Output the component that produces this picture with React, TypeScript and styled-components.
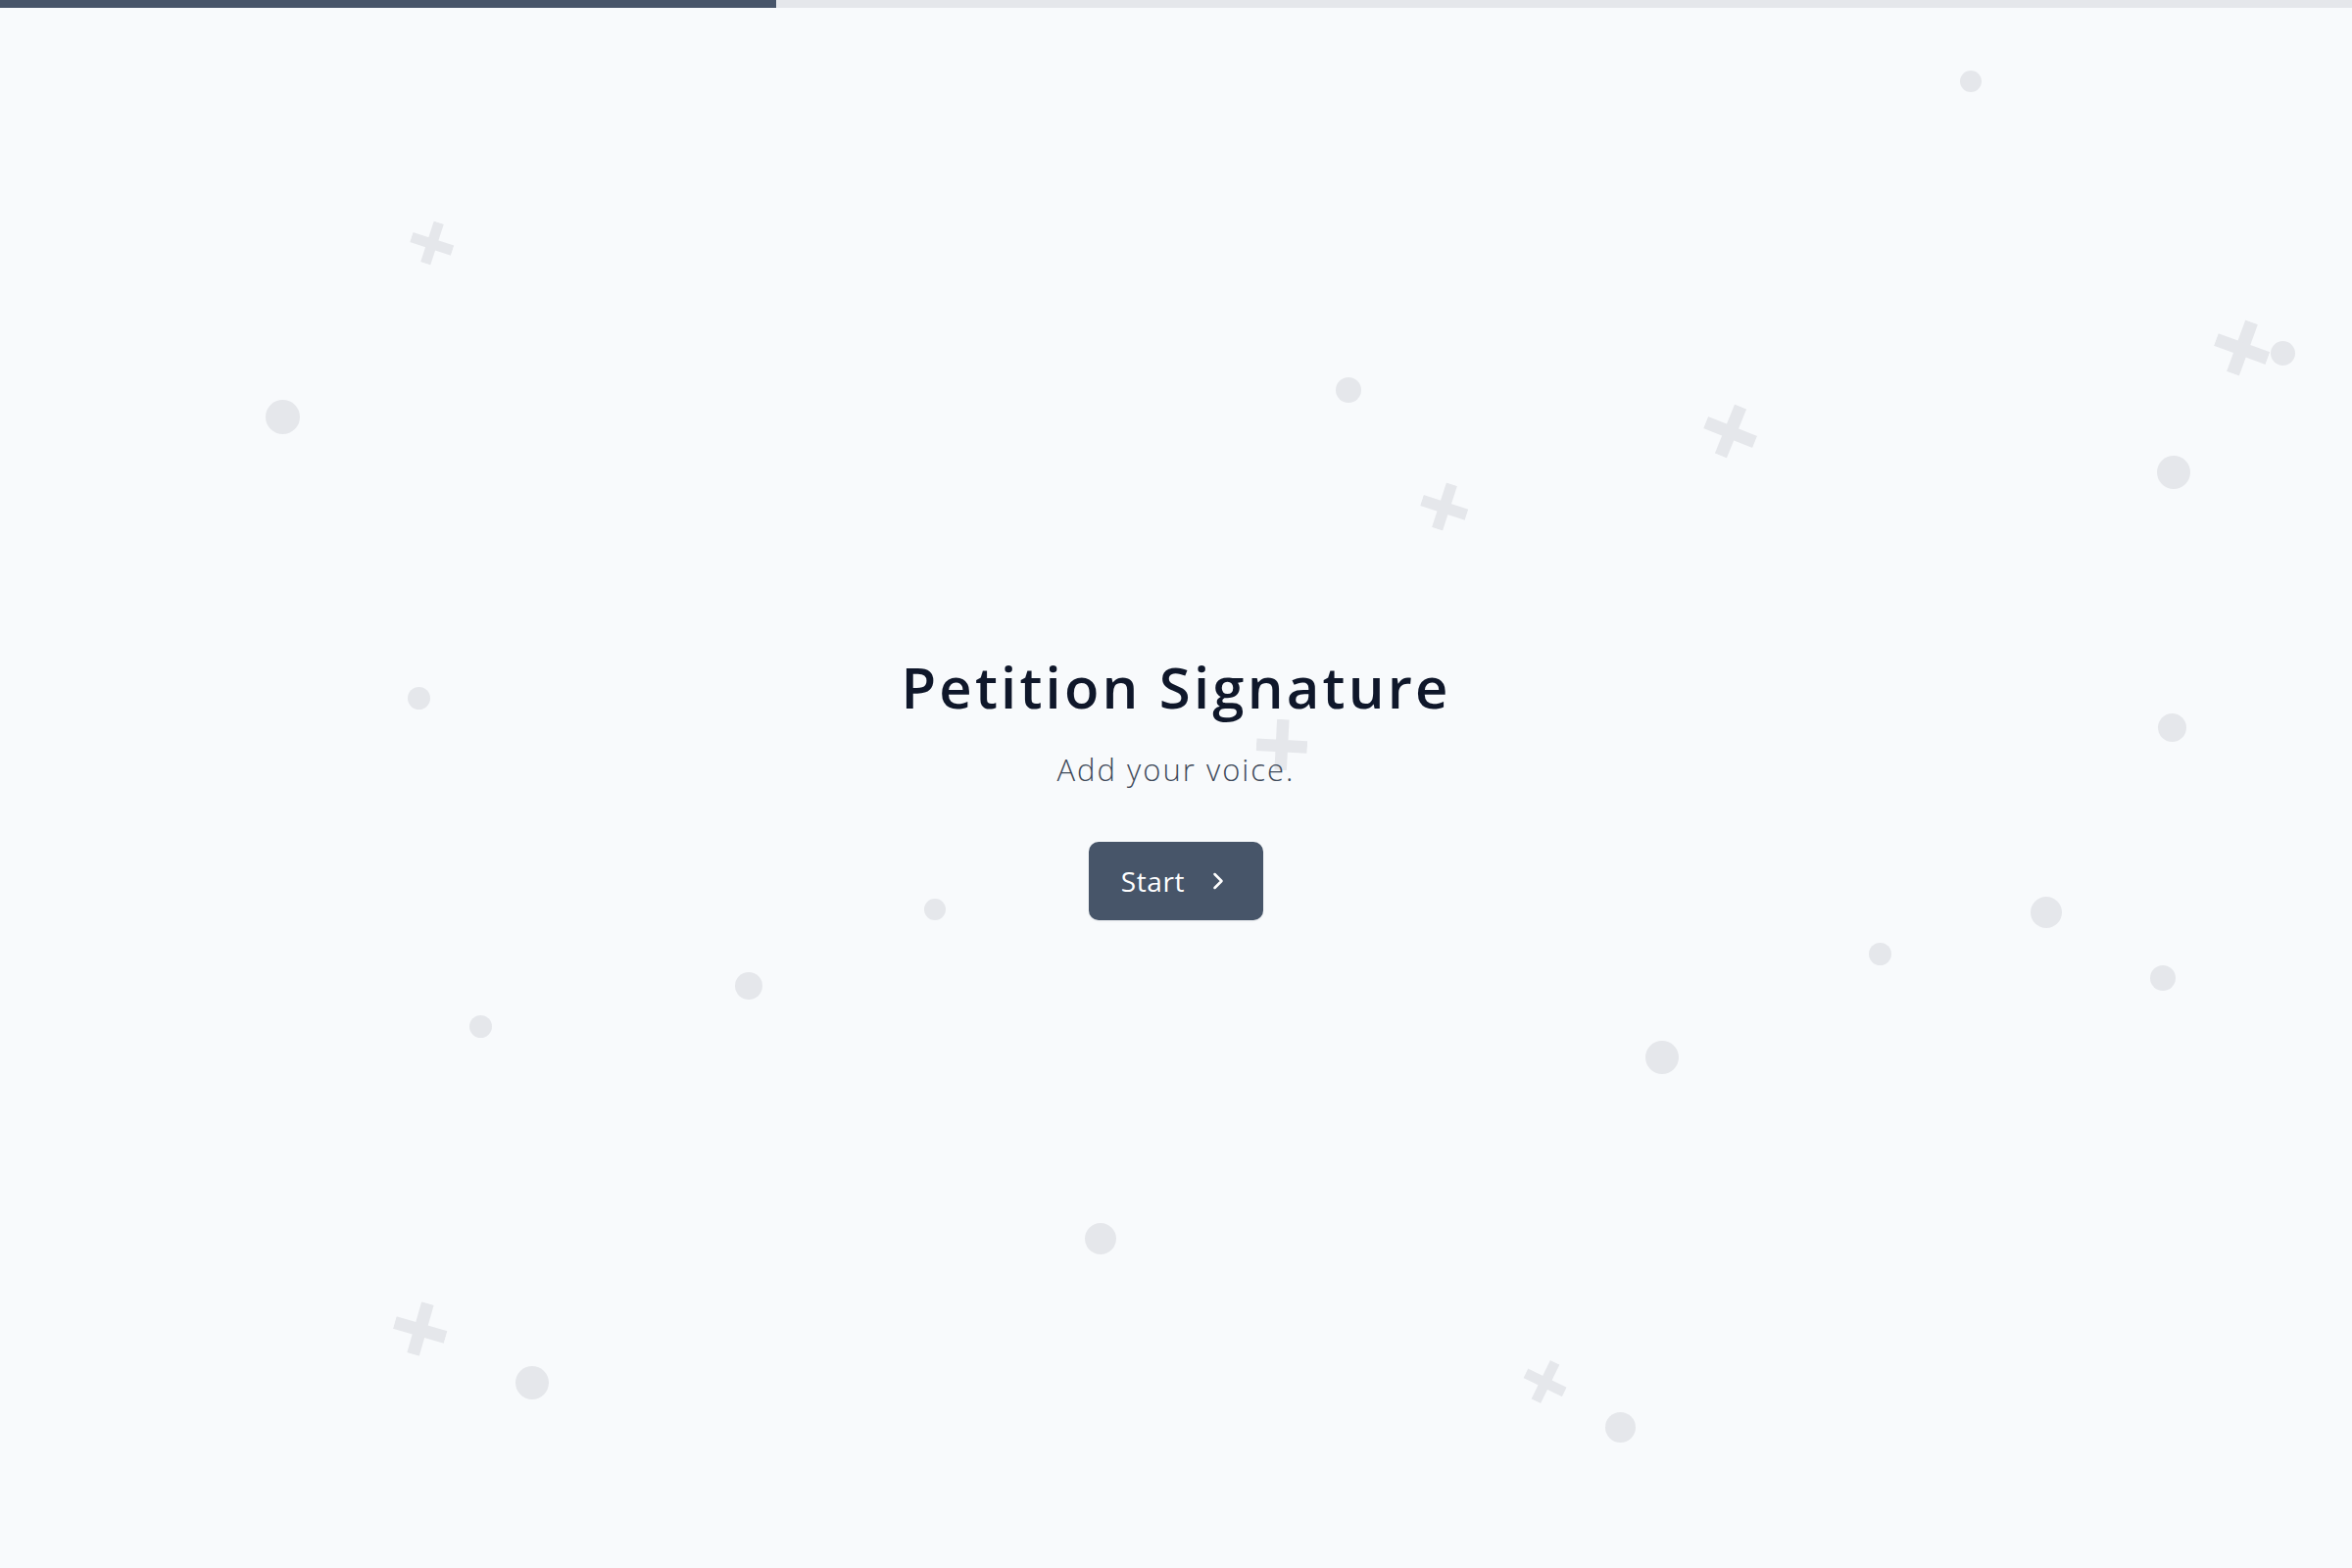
import React from 'react';
import styled, { createGlobalStyle } from 'styled-components';
import { ChevronRight } from 'lucide-react';

const progress = 33;

type Dot = { x: number; y: number; d: number };
type Cross = { x: number; y: number; s: number; r: number };

// background confetti, centres in px
const dots: Dot[] = [
  { x: 2011, y: 83, d: 22 },
  { x: 288, y: 425, d: 35 },
  { x: 1376, y: 398, d: 26 },
  { x: 2329, y: 360, d: 25 },
  { x: 2218, y: 482, d: 34 },
  { x: 427, y: 712, d: 23 },
  { x: 2216, y: 742, d: 29 },
  { x: 954, y: 928, d: 22 },
  { x: 764, y: 1006, d: 28 },
  { x: 490, y: 1047, d: 23 },
  { x: 2088, y: 931, d: 32 },
  { x: 1918, y: 973, d: 23 },
  { x: 2207, y: 998, d: 26 },
  { x: 1696, y: 1079, d: 34 },
  { x: 1123, y: 1264, d: 32 },
  { x: 543, y: 1411, d: 34 },
  { x: 1653, y: 1456, d: 31 },
];

const crosses: Cross[] = [
  { x: 441, y: 248, s: 44, r: 18 },
  { x: 1474, y: 517, s: 48, r: 18 },
  { x: 1766, y: 440, s: 54, r: 22 },
  { x: 2288, y: 355, s: 56, r: 20 },
  { x: 1308, y: 760, s: 52, r: 3 },
  { x: 429, y: 1356, s: 54, r: 16 },
  { x: 1577, y: 1410, s: 44, r: 26 },
];

const GlobalStyle = createGlobalStyle`
  html, body {
    margin: 0;
    padding: 0;
    background: #f8fafc;
  }
  body {
    font-family: "Open Sans", "Liberation Sans", sans-serif;
  }
`;

const App = () => {
  return (
    <>
      <GlobalStyle />
      <Page>
        <ProgressTrack>
          <ProgressFill style={{ width: `${progress}%` }} />
        </ProgressTrack>
        <Backdrop aria-hidden>
          {dots.map((d, i) => (
            <Circle key={`d${i}`} $x={d.x} $y={d.y} $d={d.d} />
          ))}
          {crosses.map((c, i) => (
            <CrossMark key={`c${i}`} $x={c.x} $y={c.y} $s={c.s} $r={c.r} viewBox="0 0 100 100">
              <rect x="38" y="0" width="24" height="100" />
              <rect x="0" y="40" width="100" height="24" />
            </CrossMark>
          ))}
        </Backdrop>
        <Intro>
          <Title>Petition Signature</Title>
          <Subtitle>Add your voice.</Subtitle>
          <StartButton type="button">
            Start
            <ChevronRight size={28} strokeWidth={2.2} />
          </StartButton>
        </Intro>
      </Page>
    </>
  );
};

const Page = styled.div`
  position: relative;
  width: 100%;
  height: 100vh;
  overflow: hidden;
  background: #f8fafc;
  display: flex;
  align-items: center;
  justify-content: center;
`;

const ProgressTrack = styled.div`
  position: absolute;
  top: 0;
  left: 0;
  right: 0;
  height: 8px;
  background: #e5e7eb;
  z-index: 2;
`;

const ProgressFill = styled.div`
  height: 100%;
  background: #475569;
`;

const Backdrop = styled.div`
  position: absolute;
  inset: 0;
  pointer-events: none;
  z-index: 0;
`;

const Circle = styled.span<{ $x: number; $y: number; $d: number }>`
  position: absolute;
  left: ${(p) => p.$x - p.$d / 2}px;
  top: ${(p) => p.$y - p.$d / 2}px;
  width: ${(p) => p.$d}px;
  height: ${(p) => p.$d}px;
  border-radius: 50%;
  background: #e5e7eb;
`;

const CrossMark = styled.svg<{ $x: number; $y: number; $s: number; $r: number }>`
  position: absolute;
  left: ${(p) => p.$x - p.$s / 2}px;
  top: ${(p) => p.$y - p.$s / 2}px;
  width: ${(p) => p.$s}px;
  height: ${(p) => p.$s}px;
  transform: rotate(${(p) => p.$r}deg);
  fill: #e5e7eb;
`;

const Intro = styled.main`
  position: relative;
  z-index: 1;
  display: flex;
  flex-direction: column;
  align-items: center;
  text-align: center;
  margin-top: 5px;
`;

const Title = styled.h1`
  margin: 0;
  font-size: 58px;
  line-height: 1.2;
  font-weight: 600;
  color: #0f172a;
  letter-spacing: 3.2px;
`;

const Subtitle = styled.p`
  margin: 29px 0 0;
  font-size: 31px;
  line-height: 1.3;
  font-weight: 300;
  color: #3f4a5a;
  letter-spacing: 2px;
`;

const StartButton = styled.button`
  margin-top: 54px;
  display: inline-flex;
  align-items: center;
  gap: 20px;
  height: 80px;
  padding: 0 32px 0 33px;
  border: none;
  border-radius: 10px;
  background: #475569;
  color: #ffffff;
  font-family: "Open Sans", "Liberation Sans", sans-serif;
  font-size: 28px;
  font-weight: 400;
  letter-spacing: 0.6px;
  cursor: pointer;
  box-shadow: 0 1px 2px rgba(15, 23, 42, 0.08);
`;

export default App;
